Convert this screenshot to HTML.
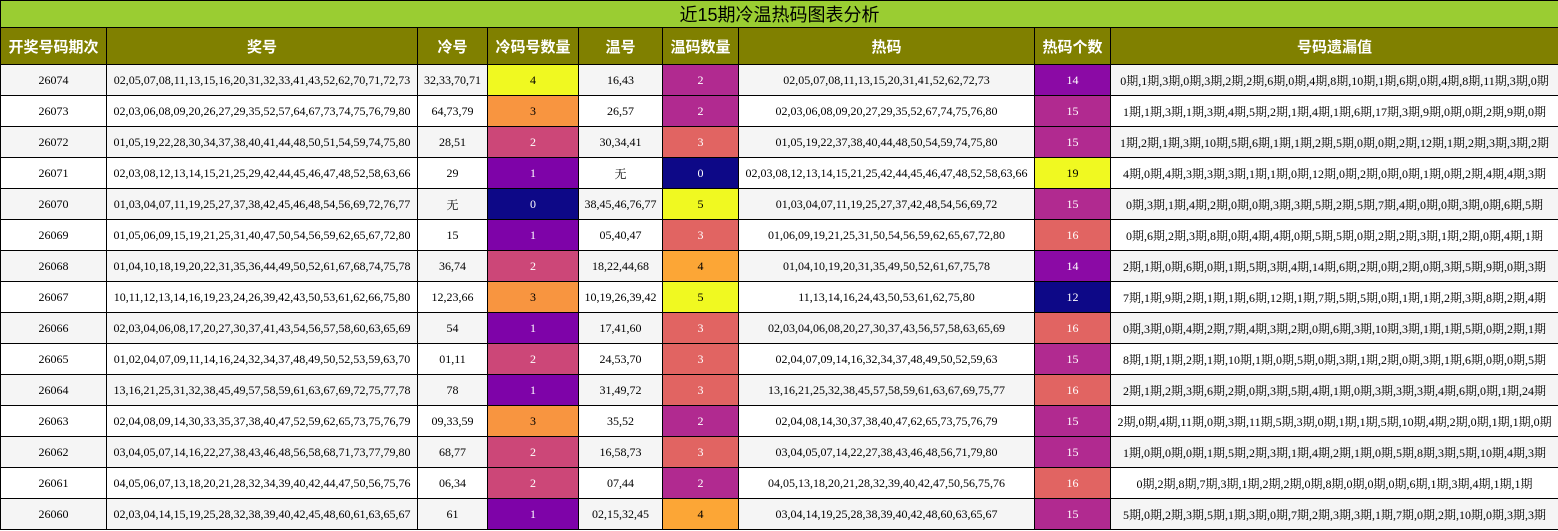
<!DOCTYPE html>
<html><head><meta charset="utf-8"><style>
body{margin:0;background:#fff;}
table{border-collapse:collapse;table-layout:fixed;width:1558px;}
td,th{border:1px solid #000;padding:0;text-align:center;white-space:nowrap;overflow:hidden;}
.t td{height:26px;background:#9acd32;font:18px "Liberation Sans","Noto Sans CJK SC",sans-serif;color:#000;}
th{height:36px;background:#808000;color:#fff;font:bold 15px "Liberation Sans","Noto Sans CJK SC",sans-serif;}
.r td{height:30px;font:12px "Liberation Serif","Noto Serif CJK SC",serif;color:#000;}
.r:nth-child(odd) td{background:#f5f5f5;}
.r:nth-child(even) td{background:#fff;}
.r td.w{color:#fff;}
</style></head><body>
<table>
<colgroup><col style="width:106px"><col style="width:311px"><col style="width:70px"><col style="width:91px"><col style="width:84px"><col style="width:76px"><col style="width:296px"><col style="width:76px"><col style="width:448px"></colgroup>
<tbody id="b">
<tr class="t"><td colspan="9">近15期冷温热码图表分析</td></tr>
<tr><th>开奖号码期次</th><th>奖号</th><th>冷号</th><th>冷码号数量</th><th>温号</th><th>温码数量</th><th>热码</th><th>热码个数</th><th>号码遗漏值</th></tr>
</tbody></table>
<script>
const D=[
["26074","02,05,07,08,11,13,15,16,20,31,32,33,41,43,52,62,70,71,72,73","32,33,70,71",4,"16,43",2,"02,05,07,08,11,13,15,20,31,41,52,62,72,73",14,"0期,1期,3期,0期,3期,2期,2期,6期,0期,4期,8期,10期,1期,6期,0期,4期,8期,11期,3期,0期"],
["26073","02,03,06,08,09,20,26,27,29,35,52,57,64,67,73,74,75,76,79,80","64,73,79",3,"26,57",2,"02,03,06,08,09,20,27,29,35,52,67,74,75,76,80",15,"1期,1期,3期,1期,3期,4期,5期,2期,1期,4期,1期,6期,17期,3期,9期,0期,0期,2期,9期,0期"],
["26072","01,05,19,22,28,30,34,37,38,40,41,44,48,50,51,54,59,74,75,80","28,51",2,"30,34,41",3,"01,05,19,22,37,38,40,44,48,50,54,59,74,75,80",15,"1期,2期,1期,3期,10期,5期,6期,1期,1期,2期,5期,0期,0期,2期,12期,1期,2期,3期,3期,2期"],
["26071","02,03,08,12,13,14,15,21,25,29,42,44,45,46,47,48,52,58,63,66","29",1,"无",0,"02,03,08,12,13,14,15,21,25,42,44,45,46,47,48,52,58,63,66",19,"4期,0期,4期,3期,3期,3期,1期,1期,0期,12期,0期,2期,0期,0期,1期,0期,2期,4期,4期,3期"],
["26070","01,03,04,07,11,19,25,27,37,38,42,45,46,48,54,56,69,72,76,77","无",0,"38,45,46,76,77",5,"01,03,04,07,11,19,25,27,37,42,48,54,56,69,72",15,"0期,3期,1期,4期,2期,0期,0期,3期,3期,5期,2期,5期,7期,4期,0期,0期,3期,0期,6期,5期"],
["26069","01,05,06,09,15,19,21,25,31,40,47,50,54,56,59,62,65,67,72,80","15",1,"05,40,47",3,"01,06,09,19,21,25,31,50,54,56,59,62,65,67,72,80",16,"0期,6期,2期,3期,8期,0期,4期,4期,0期,5期,5期,0期,2期,2期,3期,1期,2期,0期,4期,1期"],
["26068","01,04,10,18,19,20,22,31,35,36,44,49,50,52,61,67,68,74,75,78","36,74",2,"18,22,44,68",4,"01,04,10,19,20,31,35,49,50,52,61,67,75,78",14,"2期,1期,0期,6期,0期,1期,5期,3期,4期,14期,6期,2期,0期,2期,0期,3期,5期,9期,0期,3期"],
["26067","10,11,12,13,14,16,19,23,24,26,39,42,43,50,53,61,62,66,75,80","12,23,66",3,"10,19,26,39,42",5,"11,13,14,16,24,43,50,53,61,62,75,80",12,"7期,1期,9期,2期,1期,1期,6期,12期,1期,7期,5期,5期,0期,1期,1期,2期,3期,8期,2期,4期"],
["26066","02,03,04,06,08,17,20,27,30,37,41,43,54,56,57,58,60,63,65,69","54",1,"17,41,60",3,"02,03,04,06,08,20,27,30,37,43,56,57,58,63,65,69",16,"0期,3期,0期,4期,2期,7期,4期,3期,2期,0期,6期,3期,10期,3期,1期,1期,5期,0期,2期,1期"],
["26065","01,02,04,07,09,11,14,16,24,32,34,37,48,49,50,52,53,59,63,70","01,11",2,"24,53,70",3,"02,04,07,09,14,16,32,34,37,48,49,50,52,59,63",15,"8期,1期,1期,2期,1期,10期,1期,0期,5期,0期,3期,1期,2期,0期,3期,1期,6期,0期,0期,5期"],
["26064","13,16,21,25,31,32,38,45,49,57,58,59,61,63,67,69,72,75,77,78","78",1,"31,49,72",3,"13,16,21,25,32,38,45,57,58,59,61,63,67,69,75,77",16,"2期,1期,2期,3期,6期,2期,0期,3期,5期,4期,1期,0期,3期,3期,3期,4期,6期,0期,1期,24期"],
["26063","02,04,08,09,14,30,33,35,37,38,40,47,52,59,62,65,73,75,76,79","09,33,59",3,"35,52",2,"02,04,08,14,30,37,38,40,47,62,65,73,75,76,79",15,"2期,0期,4期,11期,0期,3期,11期,5期,3期,0期,1期,1期,5期,10期,4期,2期,0期,1期,1期,0期"],
["26062","03,04,05,07,14,16,22,27,38,43,46,48,56,58,68,71,73,77,79,80","68,77",2,"16,58,73",3,"03,04,05,07,14,22,27,38,43,46,48,56,71,79,80",15,"1期,0期,0期,0期,1期,5期,2期,3期,1期,4期,2期,1期,0期,5期,8期,3期,5期,10期,4期,3期"],
["26061","04,05,06,07,13,18,20,21,28,32,34,39,40,42,44,47,50,56,75,76","06,34",2,"07,44",2,"04,05,13,18,20,21,28,32,39,40,42,47,50,56,75,76",16,"0期,2期,8期,7期,3期,1期,2期,2期,0期,8期,0期,0期,0期,6期,1期,3期,4期,1期,1期"],
["26060","02,03,04,14,15,19,25,28,32,38,39,40,42,45,48,60,61,63,65,67","61",1,"02,15,32,45",4,"03,04,14,19,25,28,38,39,40,42,48,60,63,65,67",15,"5期,0期,2期,3期,5期,1期,3期,0期,7期,2期,3期,3期,1期,7期,0期,2期,10期,0期,3期,3期"]];
const C={0:"#0d0887",1:"#7e03a8",2:"#cc4778",3:"#f89540",4:"#f0f921"};
const W={0:"#0d0887",2:"#b12a90",3:"#e16462",4:"#fca636",5:"#f0f921"};
const H={12:"#0d0887",14:"#8b0aa5",15:"#b12a90",16:"#e16462",19:"#f0f921"};
const light=c=>["#f89540","#f0f921","#fca636"].includes(c);
let h="";
for(const r of D){
 const cell=(v,c)=>`<td class="${light(c)?'':'w'}" style="background:${c}!important">${v}</td>`;
 h+=`<tr class="r"><td>${r[0]}</td><td>${r[1]}</td><td>${r[2]}</td>${cell(r[3],C[r[3]])}<td>${r[4]}</td>${cell(r[5],W[r[5]])}<td>${r[6]}</td>${cell(r[7],H[r[7]])}<td>${r[8]}</td></tr>`;
}
const tb=document.createElement('tbody');tb.innerHTML=h;document.querySelector('table').appendChild(tb);
</script>
</body></html>
